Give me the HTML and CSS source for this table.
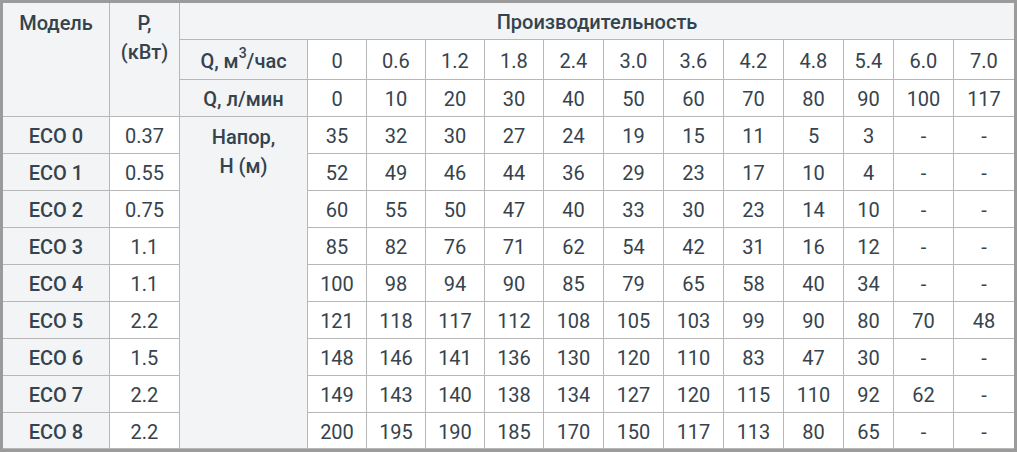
FILE: index.html
```html
<!DOCTYPE html>
<html lang="ru">
<head>
<meta charset="utf-8">
<title>ECO</title>
<link rel="stylesheet" href="styles.css">
</head>
<body>
<div class="frame">
  <div class="sheet">
    <div class="c h top model b">Модель</div>
    <div class="c h top power b">P,<br>(кВт)</div>
    <div class="c h perf b">Производительность</div>

    <div class="c h m">Q, м<sup>3</sup>/час</div>
    <div class="c w">0</div><div class="c w">0.6</div><div class="c w">1.2</div><div class="c w">1.8</div><div class="c w">2.4</div><div class="c w">3.0</div><div class="c w">3.6</div><div class="c w">4.2</div><div class="c w">4.8</div><div class="c w">5.4</div><div class="c w">6.0</div><div class="c w">7.0</div>

    <div class="c h m">Q, л/мин</div>
    <div class="c w">0</div><div class="c w">10</div><div class="c w">20</div><div class="c w">30</div><div class="c w">40</div><div class="c w">50</div><div class="c w">60</div><div class="c w">70</div><div class="c w">80</div><div class="c w">90</div><div class="c w">100</div><div class="c w">117</div>

    <div class="c h m">ECO 0</div><div class="c w">0.37</div>
    <div class="c h top head m">Напор,<br>H (м)</div>
    <div class="c w">35</div><div class="c w">32</div><div class="c w">30</div><div class="c w">27</div><div class="c w">24</div><div class="c w">19</div><div class="c w">15</div><div class="c w">11</div><div class="c w">5</div><div class="c w">3</div><div class="c w">-</div><div class="c w">-</div>

    <div class="c h m">ECO 1</div><div class="c w">0.55</div>
    <div class="c w">52</div><div class="c w">49</div><div class="c w">46</div><div class="c w">44</div><div class="c w">36</div><div class="c w">29</div><div class="c w">23</div><div class="c w">17</div><div class="c w">10</div><div class="c w">4</div><div class="c w">-</div><div class="c w">-</div>

    <div class="c h m">ECO 2</div><div class="c w">0.75</div>
    <div class="c w">60</div><div class="c w">55</div><div class="c w">50</div><div class="c w">47</div><div class="c w">40</div><div class="c w">33</div><div class="c w">30</div><div class="c w">23</div><div class="c w">14</div><div class="c w">10</div><div class="c w">-</div><div class="c w">-</div>

    <div class="c h m">ECO 3</div><div class="c w">1.1</div>
    <div class="c w">85</div><div class="c w">82</div><div class="c w">76</div><div class="c w">71</div><div class="c w">62</div><div class="c w">54</div><div class="c w">42</div><div class="c w">31</div><div class="c w">16</div><div class="c w">12</div><div class="c w">-</div><div class="c w">-</div>

    <div class="c h m">ECO 4</div><div class="c w">1.1</div>
    <div class="c w">100</div><div class="c w">98</div><div class="c w">94</div><div class="c w">90</div><div class="c w">85</div><div class="c w">79</div><div class="c w">65</div><div class="c w">58</div><div class="c w">40</div><div class="c w">34</div><div class="c w">-</div><div class="c w">-</div>

    <div class="c h m">ECO 5</div><div class="c w">2.2</div>
    <div class="c w">121</div><div class="c w">118</div><div class="c w">117</div><div class="c w">112</div><div class="c w">108</div><div class="c w">105</div><div class="c w">103</div><div class="c w">99</div><div class="c w">90</div><div class="c w">80</div><div class="c w">70</div><div class="c w">48</div>

    <div class="c h m">ECO 6</div><div class="c w">1.5</div>
    <div class="c w">148</div><div class="c w">146</div><div class="c w">141</div><div class="c w">136</div><div class="c w">130</div><div class="c w">120</div><div class="c w">110</div><div class="c w">83</div><div class="c w">47</div><div class="c w">30</div><div class="c w">-</div><div class="c w">-</div>

    <div class="c h m">ECO 7</div><div class="c w">2.2</div>
    <div class="c w">149</div><div class="c w">143</div><div class="c w">140</div><div class="c w">138</div><div class="c w">134</div><div class="c w">127</div><div class="c w">120</div><div class="c w">115</div><div class="c w">110</div><div class="c w">92</div><div class="c w">62</div><div class="c w">-</div>

    <div class="c h m">ECO 8</div><div class="c w">2.2</div>
    <div class="c w">200</div><div class="c w">195</div><div class="c w">190</div><div class="c w">185</div><div class="c w">170</div><div class="c w">150</div><div class="c w">117</div><div class="c w">113</div><div class="c w">80</div><div class="c w">65</div><div class="c w">-</div><div class="c w">-</div>
  </div>
</div>
</body>
</html>
```
FILE: styles.css
```css
html, body {
  margin: 0;
  padding: 0;
  background: #ffffff;
}

.frame {
  width: 1017px;
  height: 452px;
  box-sizing: border-box;
  border: 3px solid #9b9b9b;
  background: #b7b7b7;
}

.sheet {
  display: grid;
  grid-template-columns: 106px 69px 127px 58px 58px 58px 58px 59px 59px 59px 59px 59px 49px 59px 60px;
  grid-template-rows: 36px 39px 36px repeat(8, 36px) 35px;
  gap: 1px;
  background: #b7b7b7;
  font-family: "Roboto", "Noto Sans", sans-serif;
  font-size: 20px;
  color: #34434e;
}

.c {
  display: flex;
  align-items: center;
  justify-content: center;
  text-align: center;
  line-height: 28.5px;
  white-space: nowrap;
  padding-top: 3px;
  box-sizing: border-box;
}

.h {
  background: #f3f4f5;
}

.w {
  background: #ffffff;
  color: #36434d;
}

.b {
  font-weight: 500;
}

.m {
  font-weight: 500;
}

.top {
  align-items: flex-start;
  padding-top: 6px;
}

.model {
  grid-column: 1;
  grid-row: 1 / span 3;
}

.power {
  grid-column: 2;
  grid-row: 1 / span 3;
}

.perf {
  grid-column: 3 / span 13;
  grid-row: 1;
}

.head {
  grid-column: 3;
  grid-row: 4 / span 9;
}

sup {
  font-size: 14px;
  line-height: 0;
  position: relative;
  top: -8px;
  vertical-align: baseline;
}
```
